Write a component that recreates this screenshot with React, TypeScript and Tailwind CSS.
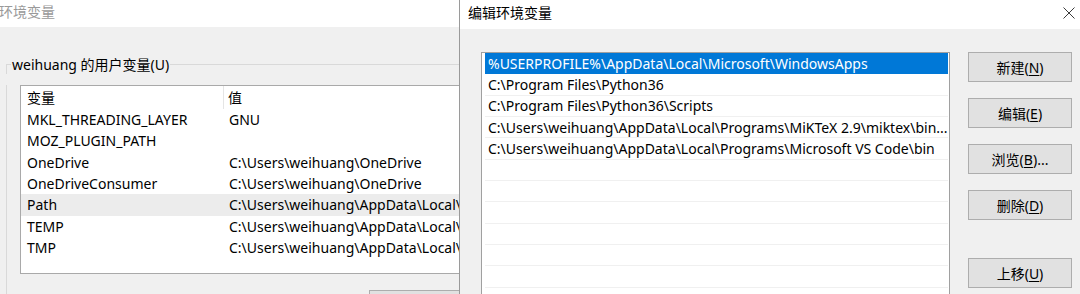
const font = "font-['Noto_Sans','Noto_Sans_CJK_SC',sans-serif]";

const userVars: [string, string][] = [
  ["MKL_THREADING_LAYER", "GNU"],
  ["MOZ_PLUGIN_PATH", ""],
  ["OneDrive", "C:\\Users\\weihuang\\OneDrive"],
  ["OneDriveConsumer", "C:\\Users\\weihuang\\OneDrive"],
  ["Path", "C:\\Users\\weihuang\\AppData\\Local\\Microsoft\\WindowsApps;"],
  ["TEMP", "C:\\Users\\weihuang\\AppData\\Local\\Temp"],
  ["TMP", "C:\\Users\\weihuang\\AppData\\Local\\Temp"],
];

const pathItems = [
  "%USERPROFILE%\\AppData\\Local\\Microsoft\\WindowsApps",
  "C:\\Program Files\\Python36",
  "C:\\Program Files\\Python36\\Scripts",
  "C:\\Users\\weihuang\\AppData\\Local\\Programs\\MiKTeX 2.9\\miktex\\bin...",
  "C:\\Users\\weihuang\\AppData\\Local\\Programs\\Microsoft VS Code\\bin",
  "",
  "",
  "",
  "",
  "",
  "",
];

function WinButton({ label, hot, suffix = "" }: { label: string; hot: string; suffix?: string }) {
  return (
    <button className="flex h-[30px] w-[104px] shrink-0 items-center justify-center border border-[#adadad] bg-[#e1e1e1] text-[14px] text-black">
      {label}(<span className="underline underline-offset-2">{hot}</span>){suffix}
    </button>
  );
}

function EnvWindow() {
  return (
    <div className="flex h-full w-[459px] shrink-0 flex-col overflow-hidden bg-[#f0f0f0]">
      <div className="flex h-[27px] shrink-0 items-center bg-white pb-[4px] text-[14px] text-[#9a9a9a]">
        <span className="-ml-px">环境变量</span>
      </div>
      <div className="ml-[6px] mt-[27px] w-[600px]">
        <div className="flex h-[20px] items-center">
          <div className="h-[10px] w-[5px] self-end border-l border-t border-[#d9d9d9]" />
          <span className="px-px text-[14px] text-black">weihuang 的用户变量(U)</span>
          <div className="h-[10px] flex-1 self-end border-t border-[#d9d9d9]" />
        </div>
        <div className="border-l border-[#d9d9d9] pb-[40px]">
          <div className="ml-[13px] mt-[11px] h-[189px] border border-[#a9a9a9] bg-white text-[14px] text-black">
            <div className="flex h-[23px] items-center">
              <div className="flex h-full w-[203px] items-center border-r border-[#e5e5e5] pl-[6px]">变量</div>
              <div className="pl-[4px]">值</div>
            </div>
            {userVars.map(([name, value]) => (
              <div
                key={name}
                className={`flex h-[21.33px] items-center ${name === "Path" ? "bg-[#ececec]" : ""}`}
              >
                <div className="w-[204px] shrink-0 pl-[6px]">{name}</div>
                <div className="whitespace-nowrap pl-[4px]">{value}</div>
              </div>
            ))}
          </div>
          <div className="ml-[362px] mt-[16px] h-[30px] w-[110px] border border-[#adadad] bg-[#e1e1e1]" />
        </div>
      </div>
    </div>
  );
}

function EditWindow() {
  return (
    <div className="flex h-full flex-1 flex-col border-l border-[#9a9a9a] bg-[#f0f0f0]">
      <div className="flex h-[29px] shrink-0 items-center justify-between bg-white pb-[5px] pl-[8px] pr-[5px]">
        <span className="text-[14px] text-black">编辑环境变量</span>
        <svg width="12" height="12" viewBox="0 0 12 12" className="mt-[2px]">
          <path d="M0.5 0.5 L11.5 11.5 M11.5 0.5 L0.5 11.5" stroke="#3c3c3c" strokeWidth="1" fill="none" />
        </svg>
      </div>
      <div className="flex flex-1 pl-[21px] pr-[7px] pt-[23px]">
        <div className="h-[260px] w-[469px] shrink-0 border border-[#a0a0a0] bg-white pl-[3px] pr-px text-[14px]">
          {pathItems.map((item, i) => (
            <div
              key={i}
              className={`flex h-[21.33px] items-center overflow-hidden whitespace-nowrap pl-[3px] ${
                i === 0 ? "bg-[#0078d7] text-white" : "border-b border-[#f0f0f0] text-black"
              }`}
            >
              <span className="truncate">{item}</span>
            </div>
          ))}
        </div>
        <div className="ml-[18px] flex flex-col">
          <WinButton label="新建" hot="N" />
          <div className="mt-[16px]">
            <WinButton label="编辑" hot="E" />
          </div>
          <div className="mt-[16px]">
            <WinButton label="浏览" hot="B" suffix="..." />
          </div>
          <div className="mt-[16px]">
            <WinButton label="删除" hot="D" />
          </div>
          <div className="mt-[38px]">
            <WinButton label="上移" hot="U" />
          </div>
        </div>
      </div>
    </div>
  );
}

export default function App() {
  return (
    <div className={`flex h-[294px] w-[1080px] overflow-hidden ${font}`}>
      <EnvWindow />
      <EditWindow />
    </div>
  );
}
